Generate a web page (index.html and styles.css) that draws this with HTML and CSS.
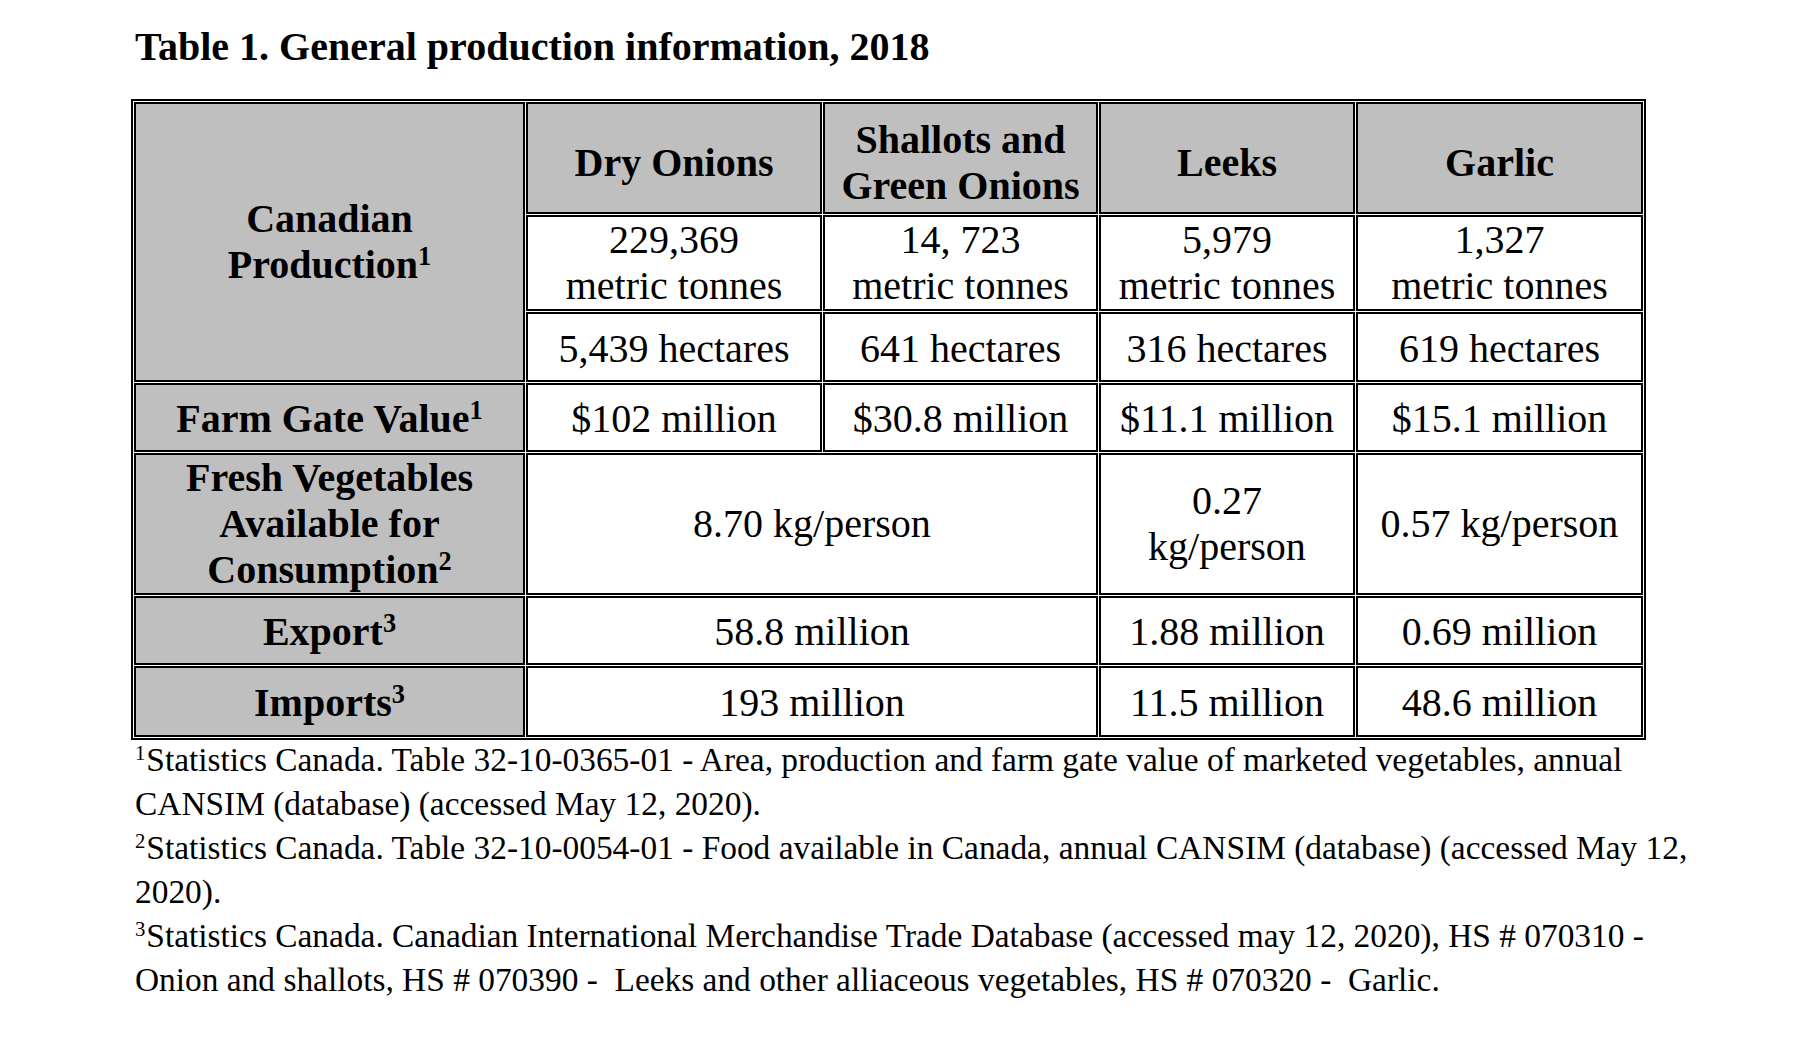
FILE: index.html
```html
<!DOCTYPE html>
<html lang="en">
<head>
<meta charset="utf-8">
<title>Table 1. General production information, 2018</title>
<link rel="stylesheet" href="styles.css">
</head>
<body>
<div class="page">
  <h1 class="title">Table 1. General production information, 2018</h1>
  <table class="prod">
    <colgroup>
      <col class="c1"><col class="c2"><col class="c3"><col class="c4"><col class="c5">
    </colgroup>
    <tr class="r-head">
      <th class="label" rowspan="3">Canadian<br>Production<sup>1</sup></th>
      <th class="head">Dry Onions</th>
      <th class="head">Shallots and<br>Green Onions</th>
      <th class="head">Leeks</th>
      <th class="head">Garlic</th>
    </tr>
    <tr class="r-tonnes">
      <td>229,369<br>metric tonnes</td>
      <td>14, 723<br>metric tonnes</td>
      <td>5,979<br>metric tonnes</td>
      <td>1,327<br>metric tonnes</td>
    </tr>
    <tr class="r-ha">
      <td>5,439 hectares</td>
      <td>641 hectares</td>
      <td>316 hectares</td>
      <td>619 hectares</td>
    </tr>
    <tr class="r-farm">
      <th class="label">Farm Gate Value<sup>1</sup></th>
      <td>$102 million</td>
      <td>$30.8 million</td>
      <td>$11.1 million</td>
      <td>$15.1 million</td>
    </tr>
    <tr class="r-fresh">
      <th class="label">Fresh Vegetables<br>Available for<br>Consumption<sup>2</sup></th>
      <td colspan="2">8.70 kg/person</td>
      <td>0.27<br>kg/person</td>
      <td>0.57 kg/person</td>
    </tr>
    <tr class="r-export">
      <th class="label">Export<sup>3</sup></th>
      <td colspan="2">58.8 million</td>
      <td>1.88 million</td>
      <td>0.69 million</td>
    </tr>
    <tr class="r-import">
      <th class="label">Imports<sup>3</sup></th>
      <td colspan="2">193 million</td>
      <td>11.5 million</td>
      <td>48.6 million</td>
    </tr>
  </table>
  <div class="notes">
    <p><sup>1</sup>Statistics Canada. Table 32-10-0365-01 - Area, production and farm gate value of marketed vegetables, annual CANSIM (database) (accessed May 12, 2020).</p>
    <p><sup>2</sup>Statistics Canada. Table 32-10-0054-01 - Food available in Canada, annual CANSIM (database) (accessed May 12, 2020).</p>
    <p><sup>3</sup>Statistics Canada. Canadian International Merchandise Trade Database (accessed may 12, 2020), HS # 070310 - Onion and shallots, HS # 070390 - &nbsp;Leeks and other alliaceous vegetables, HS # 070320 - &nbsp;Garlic.</p>
  </div>
</div>
</body>
</html>
```
FILE: styles.css
```css
html, body {
  margin: 0;
  padding: 0;
  background: #ffffff;
  color: #000000;
  font-family: "Liberation Serif", "Times New Roman", serif;
}

.page {
  padding: 24px 0 0 135px;
}

.title {
  margin: 0 0 29px 0;
  font-size: 40px;
  line-height: 46px;
  font-weight: bold;
}

.prod {
  border-collapse: separate;
  border-spacing: 1px;
  border: 2px solid #000;
  table-layout: fixed;
  width: 1515px;
  margin-left: -4px;
  font-size: 40px;
  line-height: 46px;
}

.c1 { width: 391px; }
.c2 { width: 296px; }
.c3 { width: 275px; }
.c4 { width: 256px; }
.c5 { width: 287px; }

.prod th,
.prod td {
  border: 2px solid #000;
  padding: 0 4px;
  text-align: center;
  vertical-align: middle;
  font-weight: normal;
}

.prod th {
  background: #bfbfbf;
  font-weight: bold;
}

.prod th.head {
  padding-top: 9px;
}

.r-ha td,
.r-farm td,
.r-farm th,
.r-export td,
.r-export th,
.r-import td,
.r-import th {
  padding-top: 3px;
}

.prod sup {
  font-size: 0.66em;
  line-height: 0;
  vertical-align: 0.5em;
}

.r-head { height: 112px; }
.r-tonnes { height: 96px; }
.r-ha { height: 70px; }
.r-farm { height: 69px; }
.r-fresh { height: 142px; }
.r-export { height: 69px; }
.r-import { height: 71px; }

.notes {
  width: 1575px;
  margin-top: -2px;
  font-size: 33.4px;
  line-height: 44px;
}

.notes p {
  margin: 0;
}

.notes sup {
  font-size: 0.62em;
  line-height: 0;
  vertical-align: 0.55em;
  margin-right: 1px;
}
```
